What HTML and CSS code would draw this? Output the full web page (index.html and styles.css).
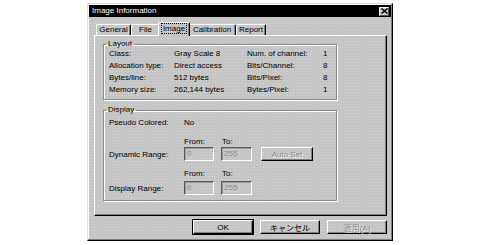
FILE: index.html
```html
<!DOCTYPE html>
<html>
<head>
    <meta charset="UTF-8">
    <title>Image Information</title>
    <link rel="stylesheet" href="styles.css">
</head>
<body>
    <div class="dialog">
        <div class="titlebar">
            <span class="title">Image Information</span>
            <span class="close">
                <svg width="7" height="6" viewBox="0 0 7 6"><path d="M0.5 0.5 L6.5 5.5 M6.5 0.5 L0.5 5.5" stroke="#000" stroke-width="1.4"/></svg>
            </span>
        </div>
        <div class="body">
            <div class="tabs">
                <span class="tab tab-general">General</span>
                <span class="tab tab-file">File</span>
                <span class="tab tab-image active"><i>Image</i></span>
                <span class="tab tab-calib">Calibration</span>
                <span class="tab tab-report">Report</span>
            </div>
            <div class="panel">
                <fieldset class="group layout">
                    <legend>Layout</legend>
                    <div class="info">
                        <span>Class:</span><span>Gray Scale 8</span><span>Num. of channel:</span><span>1</span>
                        <span>Allocation type:</span><span>Direct access</span><span>Bits/Channel:</span><span>8</span>
                        <span>Bytes/line:</span><span>512 bytes</span><span>Bits/Pixel:</span><span>8</span>
                        <span>Memory size:</span><span>262,144 bytes</span><span>Bytes/Pixel:</span><span>1</span>
                    </div>
                </fieldset>
                <fieldset class="group display">
                    <legend>Display</legend>
                    <div class="row pseudo"><span class="lbl">Pseudo Colored:</span><span>No</span></div>
                    <div class="hdr"><span>From:</span><span>To:</span></div>
                    <div class="row range">
                        <span class="lbl">Dynamic Range:</span>
                        <span class="field">0</span>
                        <span class="field to">255</span>
                        <span class="btn auto disabled">Auto Set</span>
                    </div>
                    <div class="hdr second"><span>From:</span><span>To:</span></div>
                    <div class="row range last">
                        <span class="lbl">Display Range:</span>
                        <span class="field">0</span>
                        <span class="field to">255</span>
                    </div>
                </fieldset>
            </div>
            <div class="buttons">
                <span class="btn ok">OK</span>
                <span class="btn">キャンセル</span>
                <span class="btn disabled">適用(A)</span>
            </div>
        </div>
    </div>
</body>
</html>
```

FILE: styles.css
```css
* {
    margin: 0;
    padding: 0;
    box-sizing: border-box;
}
body {
    background: #fff;
    font-family: "Liberation Sans", "Noto Sans CJK JP", sans-serif;
    font-size: 8px;
    color: #000;
}

.dialog {
    width: 306px;
    height: 238px;
    margin: 3px 0 0 87px;
    padding: 1px;
    background: #c5c5c5 radial-gradient(circle, #d3d3d3 0.6px, transparent 0.9px) 0 0 / 3px 3px;
    border: 1px solid;
    border-color: #dcdcdc #000 #000 #dcdcdc;
    box-shadow: inset -1px -1px 0 #808080, inset 1px 1px 0 #fff;
}

/* title bar */
.titlebar {
    height: 12px;
    background: #000;
    color: #fff;
    display: flex;
    align-items: center;
    justify-content: space-between;
    padding: 0 2px 0 3px;
}
.title {
    font-size: 8px;
    line-height: 12px;
}
.close {
    width: 10px;
    height: 9px;
    background: #c6c6c6;
    border: 1px solid;
    border-color: #fff #555 #555 #fff;
    display: flex;
    align-items: center;
    justify-content: center;
}

.body {
    padding: 5px 4px 0 5px;
}

/* tabs */
.tabs {
    display: flex;
    align-items: flex-end;
    height: 13px;
    padding-left: 2px;
}
.tab {
    height: 11px;
    line-height: 10px;
    text-align: center;
    border: 1px solid;
    border-bottom: none;
    border-color: #fff #000 #000 #fff;
    border-radius: 2px 2px 0 0;
    box-shadow: inset -1px 0 0 #808080;
}
.tab-general { width: 35px; }
.tab-file { width: 29px; }
.tab-image { width: 32px; }
.tab-calib { width: 48px; }
.tab-report { width: 30px; }
.tab.active {
    height: 14px;
    margin: 0 -2px -1px;
    background: inherit;
    background-color: #c5c5c5;
    position: relative;
    z-index: 1;
    padding-top: 1px;
}
.tab.active i {
    font-style: normal;
    outline: 1px dotted #000;
    padding: 0 1px;
}

/* page */
.panel {
    height: 181px;
    border: 1px solid;
    border-color: #fff #000 #000 #fff;
    box-shadow: inset -1px -1px 0 #808080;
    padding: 3px 0 0 8px;
}

.group {
    width: 234px;
    border: 1px solid #8c8c8c;
    box-shadow: 1px 1px 0 #fff, inset 1px 1px 0 #fff;
    padding: 0 0 3px 5px;
}
.group legend {
    line-height: 10px;
    padding: 0 2px;
    margin-left: -3px;
}

.info {
    display: grid;
    grid-template-columns: 65px 73px 76px 1fr;
    grid-auto-rows: 12px;
    line-height: 12px;
    margin-top: -1px;
}

.display {
    margin-top: 5px;
    padding-bottom: 5px;
}
.row {
    display: flex;
    align-items: center;
    height: 12px;
}
.lbl {
    width: 75px;
}
.pseudo {
    margin-top: 1px;
}
.hdr {
    display: flex;
    height: 10px;
    line-height: 10px;
    margin-top: 9px;
    padding-left: 75px;
}
.hdr span {
    width: 38px;
}
.hdr.second {
    margin-top: 8px;
}
.range {
    height: 14px;
}
.range.last {
    margin-top: 2px;
}
.field {
    width: 30px;
    height: 14px;
    line-height: 12px;
    padding-left: 2px;
    color: #8a8a8a;
    border: 1px solid;
    border-color: #5a5a5a #fff #fff #5a5a5a;
    box-shadow: inset 1px 1px 0 #9a9a9a;
}
.field.to {
    width: 31px;
    margin-left: 7px;
}

.btn {
    display: flex;
    align-items: center;
    justify-content: center;
    height: 14px;
    border: 1px solid;
    border-color: #fff #000 #000 #fff;
    box-shadow: inset -1px -1px 0 #808080;
}
.btn.disabled {
    color: #8a8a8a;
    text-shadow: 1px 1px 0 #f4f4f4;
}
.auto {
    width: 52px;
    margin-left: 9px;
}

.buttons {
    display: flex;
    justify-content: flex-end;
    gap: 7px;
    margin-top: 4px;
}
.buttons .btn {
    width: 60px;
}
.btn.ok {
    outline: 1px solid #000;
}
```
